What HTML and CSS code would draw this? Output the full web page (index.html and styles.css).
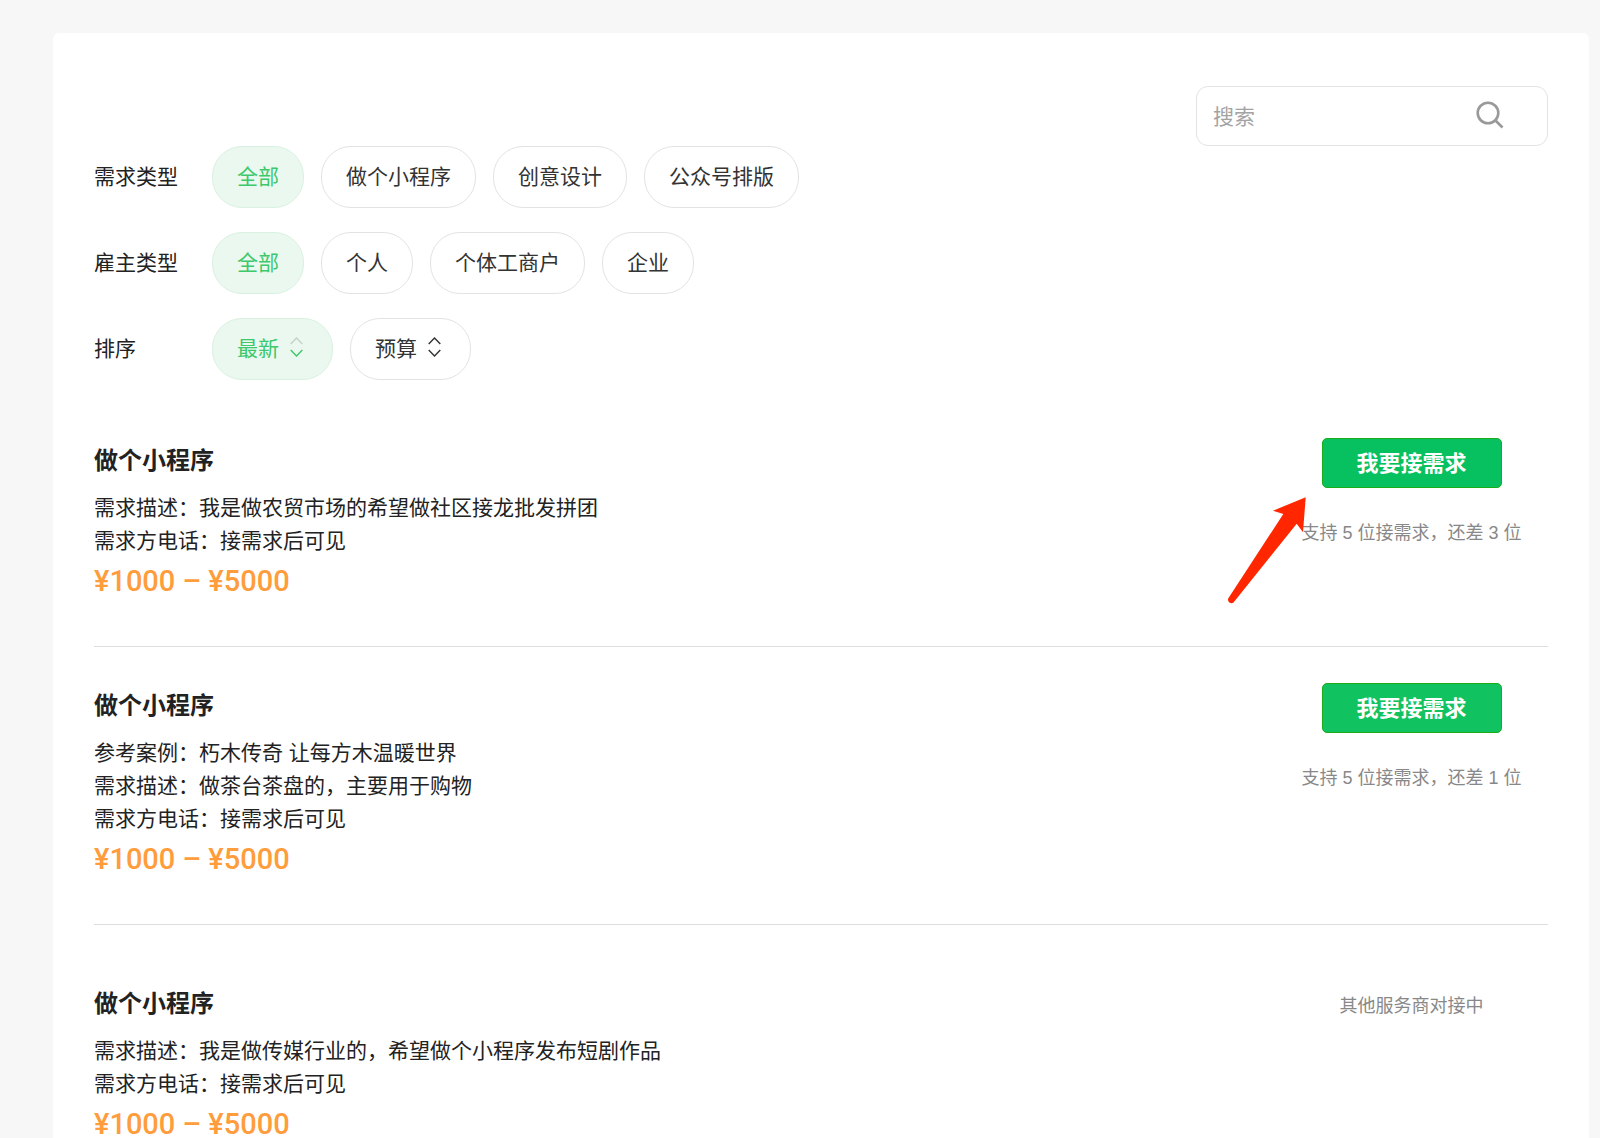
FILE: index.html
```html
<!DOCTYPE html>
<html lang="zh-CN">
<head>
<meta charset="utf-8">
<meta name="viewport" content="width=device-width, initial-scale=1">
<title>需求列表</title>
<link rel="stylesheet" href="styles.css">
</head>
<body>
<main class="panel">
  <form class="search" role="search">
    <input class="search-input" type="search" placeholder="搜索" aria-label="搜索">
    <button class="search-button" type="button" aria-label="搜索">
      <svg class="search-icon" viewBox="0 0 28 28" aria-hidden="true"><circle cx="12" cy="12" r="10.3"/><path d="M19 19l7.500 7.500"/></svg>
    </button>
  </form>

  <section class="filters">
    <div class="filter-row" role="group" aria-labelledby="filter-type">
      <span class="filter-label" id="filter-type">需求类型</span>
      <button class="pill pill-active" type="button">全部</button>
      <button class="pill" type="button">做个小程序</button>
      <button class="pill" type="button">创意设计</button>
      <button class="pill" type="button">公众号排版</button>
    </div>
    <div class="filter-row" role="group" aria-labelledby="filter-owner">
      <span class="filter-label" id="filter-owner">雇主类型</span>
      <button class="pill pill-active" type="button">全部</button>
      <button class="pill" type="button">个人</button>
      <button class="pill" type="button">个体工商户</button>
      <button class="pill" type="button">企业</button>
    </div>
    <div class="filter-row" role="group" aria-labelledby="filter-sort">
      <span class="filter-label" id="filter-sort">排序</span>
      <button class="pill pill-sort pill-active" type="button">最新
        <svg class="sort-icon" viewBox="0 0 13 20" aria-hidden="true"><path class="sort-up" d="M.7 7l5.800-6 5.800 6"/><path d="M.7 13l5.800 6 5.800-6"/></svg>
      </button>
      <button class="pill pill-sort" type="button">预算
        <svg class="sort-icon" viewBox="0 0 13 20" aria-hidden="true"><path class="sort-up" d="M.7 7l5.800-6 5.800 6"/><path d="M.7 13l5.800 6 5.800-6"/></svg>
      </button>
    </div>
  </section>

  <section class="demands">
    <article class="demand">
      <div class="info">
        <h2 class="title">做个小程序</h2>
        <p class="line">需求描述：我是做农贸市场的希望做社区接龙批发拼团</p>
        <p class="line">需求方电话：接需求后可见</p>
        <p class="price">¥1000 – ¥5000</p>
      </div>
      <div class="action">
        <button class="accept" type="button">我要接需求</button>
        <p class="note">支持 5 位接需求，还差 3 位</p>
        <svg class="pointer" viewBox="0 0 80 110" aria-hidden="true"><path d="M78.700 1.300L76 36.300 69.700 27.700 6.500 106.500A3.500 3.500 0 0 1 1.200 102.500L56.300 18 46 14.700z"/></svg>
      </div>
    </article>
    <article class="demand">
      <div class="info">
        <h2 class="title">做个小程序</h2>
        <p class="line">参考案例：朽木传奇 让每方木温暖世界</p>
        <p class="line">需求描述：做茶台茶盘的，主要用于购物</p>
        <p class="line">需求方电话：接需求后可见</p>
        <p class="price">¥1000 – ¥5000</p>
      </div>
      <div class="action">
        <button class="accept accept-soft" type="button">我要接需求</button>
        <p class="note">支持 5 位接需求，还差 1 位</p>
      </div>
    </article>
    <article class="demand demand-taken">
      <div class="info">
        <h2 class="title">做个小程序</h2>
        <p class="line">需求描述：我是做传媒行业的，希望做个小程序发布短剧作品</p>
        <p class="line">需求方电话：接需求后可见</p>
        <p class="price">¥1000 – ¥5000</p>
      </div>
      <div class="action">
        <p class="status">其他服务商对接中</p>
      </div>
    </article>
  </section>
</main>
</body>
</html>
```
FILE: styles.css
```css
* {
  box-sizing: border-box;
}

body {
  margin: 0;
  padding: 33px 11px 0 53px;
  background: #f7f7f7;
  color: #222;
  font-family: "Liberation Sans", "Noto Sans CJK SC", sans-serif;
  font-size: 21px;
}

button,
input {
  margin: 0;
  font: inherit;
}

h2,
p {
  margin: 0;
}

.panel {
  display: flex;
  flex-direction: column;
  padding: 53px 41px 0;
  border-radius: 6px 6px 0 0;
  background: #fff;
}

/* Search */
.search {
  display: flex;
  align-items: center;
  align-self: flex-end;
  width: 352px;
  height: 60px;
  padding: 0 43px 0 16px;
  border: 1px solid #e3e3e3;
  border-radius: 12px;
}

.search-input {
  flex: 1;
  min-width: 0;
  height: 56px;
  padding: 2px 0 0;
  border: 0;
  outline: 0;
  background: none;
  color: #222;
}

.search-input::placeholder {
  color: #a3a3a3;
}

.search-button {
  display: flex;
  padding: 0 0 2px;
  border: 0;
  background: none;
}

.search-icon {
  width: 28px;
  height: 28px;
  fill: none;
  stroke: #999;
  stroke-width: 2.6;
}

/* Filters */
.filters {
  display: flex;
  flex-direction: column;
  gap: 24px;
}

.filter-row {
  display: flex;
  align-items: center;
  gap: 17px;
}

.filter-label {
  width: 101px;
  padding-bottom: 4px;
}

.pill {
  display: flex;
  align-items: center;
  height: 62px;
  padding: 0 24px 4px;
  border: 1px solid #e3e3e3;
  border-radius: 30px;
  background: #fff;
  color: #333;
  white-space: nowrap;
}

.pill-sort {
  gap: 11px;
  padding-right: 29px;
}

.pill-active {
  border-color: #d9f1e1;
  background: #ebf8ef;
  color: #3cc86b;
}

.sort-icon {
  width: 13px;
  height: 20px;
  fill: none;
  stroke: currentColor;
  stroke-width: 1.4;
}

.pill-active .sort-up {
  stroke: #c3d3c8;
}

/* Demand list */
.demands {
  margin-top: 22px;
}

.demand {
  display: flex;
  justify-content: space-between;
  padding: 36px 0 47px;
  border-bottom: 1px solid #ddd;
}

.demand:last-child {
  border-bottom: 0;
}

.demand-taken {
  padding-top: 56px;
}

.info {
  padding-top: 8px;
}

.title {
  margin-bottom: 15px;
  font-size: 24px;
  font-weight: 700;
  line-height: 30px;
}

.line {
  line-height: 33px;
}

.price {
  margin-top: 6px;
  color: #ff9c3b;
  font-family: Roboto, sans-serif;
  font-size: 29px;
  font-weight: 500;
  line-height: 36px;
}

.action {
  position: relative;
  display: flex;
  flex-direction: column;
  align-items: center;
  width: 273px;
}

.accept {
  width: 180px;
  height: 50px;
  padding: 0 0 4px;
  border: 1px solid #1aad19;
  border-radius: 5px;
  background: #07c160;
  color: #fff;
  font-size: 22px;
  font-weight: 700;
}

.accept-soft {
  background: #11c261;
}

.note,
.status {
  color: #888;
  font-size: 18px;
  line-height: 26px;
  white-space: nowrap;
}

.note {
  margin-top: 32px;
}

.status {
  margin-top: 12px;
}

.pointer {
  position: absolute;
  top: 58px;
  left: -48px;
  width: 80px;
  height: 110px;
  fill: #ff2600;
}
```
